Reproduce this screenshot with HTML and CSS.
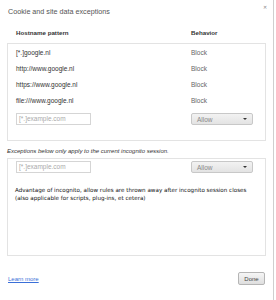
FILE: index.html
```html
<!DOCTYPE html>
<html lang="en">
<head>
    <meta charset="UTF-8">
    <title>Cookie and site data exceptions</title>
    <link rel="stylesheet" href="styles.css">
</head>
<body>
    <div class="dialog">
        <div class="title-bar">
            <h1 class="title">Cookie and site data exceptions</h1>
            <span class="close">&#x2715;</span>
        </div>

        <div class="col-headers">
            <span class="col-pattern">Hostname pattern</span>
            <span class="col-behavior">Behavior</span>
        </div>

        <div class="exception-list">
            <div class="row"><span class="pattern">[*.]google.nl</span><span class="behavior">Block</span></div>
            <div class="row"><span class="pattern">http://www.google.nl</span><span class="behavior">Block</span></div>
            <div class="row"><span class="pattern">https://www.google.nl</span><span class="behavior">Block</span></div>
            <div class="row"><span class="pattern">file:///www.google.nl</span><span class="behavior">Block</span></div>
            <div class="row new-row">
                <span class="pattern"><span class="input">[*.]example.com</span></span>
                <span class="behavior"><span class="select">Allow<span class="arrow"></span></span></span>
            </div>
        </div>

        <p class="note">Exceptions below only apply to the current incognito session.</p>

        <div class="exception-list incognito">
            <div class="row new-row">
                <span class="pattern"><span class="input">[*.]example.com</span></span>
                <span class="behavior"><span class="select">Allow<span class="arrow"></span></span></span>
            </div>
            <p class="advice">Advantage of incognito, allow rules are thrown away after incognito session closes<br>(also applicable for scripts, plug-ins, et cetera)</p>
        </div>

        <div class="footer">
            <a class="learn-more" href="#">Learn more</a>
            <button class="done">Done</button>
        </div>
    </div>
</body>
</html>
```

FILE: styles.css
```css
* {
    margin: 0;
    padding: 0;
    box-sizing: border-box;
}

body {
    font-family: 'Liberation Sans', Arial, sans-serif;
    background-color: #fff;
    color: #333;
}

.dialog {
    width: 274px;
    height: 300px;
    border-right: 1px solid #cfcfcf;
    padding: 0 9px 0 7px;
}

.title-bar {
    display: flex;
    justify-content: space-between;
    align-items: center;
    height: 22px;
    padding-left: 1px;
}

.title {
    font-size: 7.2px;
    font-weight: normal;
    color: #555;
}

.close {
    font-size: 5px;
    color: #888;
    margin-top: -8px;
    margin-right: -3px;
}

.col-headers {
    display: grid;
    grid-template-columns: 175px 1fr;
    padding-left: 9px;
    height: 21px;
    align-items: center;
    font-size: 6.2px;
    font-weight: bold;
    color: #333;
}

.exception-list {
    width: 259px;
    border: 1px solid #e3e3e3;
    height: 98px;
}

.row {
    display: grid;
    grid-template-columns: 175px 1fr;
    padding-left: 8px;
    height: 16px;
    align-items: center;
    font-size: 6.5px;
    color: #333;
}

.behavior {
    color: #666;
}

.new-row {
    height: 17px;
    align-items: end;
}

.input {
    display: block;
    width: 75px;
    height: 12px;
    border: 1px solid #d5d5d5;
    color: #aaa;
    line-height: 10px;
    padding-left: 2px;
}

.select {
    display: flex;
    justify-content: space-between;
    align-items: center;
    width: 62px;
    height: 12px;
    border: 1px solid #c8c8c8;
    border-radius: 2px;
    background: linear-gradient(#f2f2f2, #e3e3e3);
    color: #888;
    padding: 0 5px;
}

.arrow {
    border-left: 2px solid transparent;
    border-right: 2px solid transparent;
    border-top: 2px solid #333;
}

.note {
    font-size: 6px;
    font-style: italic;
    color: #333;
    height: 17px;
    line-height: 20px;
}

.incognito .new-row {
    height: 14px;
}

.advice {
    font-family: 'DejaVu Sans', Verdana, sans-serif;
    font-size: 5.6px;
    line-height: 8px;
    color: #111;
    padding: 13px 4px 0 7px;
}

.footer {
    display: flex;
    justify-content: space-between;
    align-items: center;
    margin-top: 16px;
}

.learn-more {
    font-size: 6px;
    color: #3a6fd8;
    margin-left: 1px;
}

.done {
    width: 27px;
    height: 13px;
    font-family: 'Liberation Sans', Arial, sans-serif;
    font-size: 6px;
    color: #444;
    border: 1px solid #b5b5b5;
    border-radius: 2px;
    background: linear-gradient(#f6f6f6, #dedede);
    margin-right: -1px;
}
```
